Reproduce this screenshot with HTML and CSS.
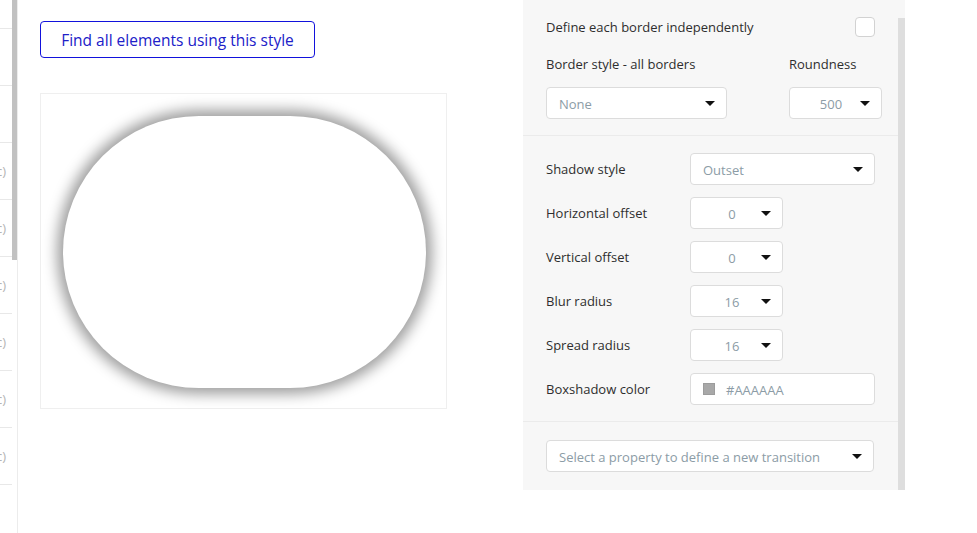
FILE: index.html
```html
<!DOCTYPE html>
<html lang="en">
<head>
<meta charset="utf-8">
<title>Style editor</title>
<link rel="stylesheet" href="styles.css">
</head>
<body>
<div class="app">
  <aside class="sidebar">
    <div class="rows">
      <div class="row first"></div>
      <div class="row"></div>
      <div class="row"></div>
      <div class="row"><span>Style (abc)</span></div>
      <div class="row"><span>Style (abc)</span></div>
      <div class="row"><span>Style (abc)</span></div>
      <div class="row"><span>Style (abc)</span></div>
      <div class="row"><span>Style (abc)</span></div>
      <div class="row"><span>Style (abc)</span></div>
    </div>
    <div class="side-scroll"></div>
  </aside>

  <main class="main">
    <button class="find-btn" type="button">Find all elements using this style</button>
    <div class="canvas">
      <div class="preview"></div>
    </div>
  </main>

  <section class="panel">
    <div class="panel-body">
      <div class="section borders">
        <div class="check-row">
          <span class="label">Define each border independently</span>
          <span class="checkbox"></span>
        </div>
        <div class="border-grid">
          <span class="label">Border style - all borders</span>
          <span class="label">Roundness</span>
          <div class="select"><span class="val">None</span><i class="caret"></i></div>
          <div class="select num"><span class="val">500</span><i class="caret"></i></div>
        </div>
      </div>

      <div class="section shadow">
        <div class="field-grid">
          <span class="label">Shadow style</span>
          <div class="select wide"><span class="val">Outset</span><i class="caret"></i></div>

          <span class="label">Horizontal offset</span>
          <div class="select num"><span class="val">0</span><i class="caret"></i></div>

          <span class="label">Vertical offset</span>
          <div class="select num"><span class="val">0</span><i class="caret"></i></div>

          <span class="label">Blur radius</span>
          <div class="select num"><span class="val">16</span><i class="caret"></i></div>

          <span class="label">Spread radius</span>
          <div class="select num"><span class="val">16</span><i class="caret"></i></div>

          <span class="label">Boxshadow color</span>
          <div class="select wide color"><span class="swatch"></span><span class="val">#AAAAAA</span></div>
        </div>
      </div>

      <div class="section transition">
        <div class="select full"><span class="val">Select a property to define a new transition</span><i class="caret"></i></div>
      </div>
    </div>
    <div class="panel-scroll"></div>
  </section>
</div>
</body>
</html>
```

FILE: styles.css
```css
* { box-sizing: border-box; }

html, body {
  margin: 0;
  padding: 0;
  background: #ffffff;
}

body {
  font-family: "Open Sans", "Noto Sans", "Liberation Sans", sans-serif;
  font-size: 13px;
  color: #333333;
}

.app {
  display: flex;
  align-items: flex-start;
  width: 977px;
  height: 533px;
  overflow: hidden;
}

/* left strip */
.sidebar {
  flex: none;
  display: flex;
  width: 18px;
  height: 533px;
  border-right: 1px solid #ececec;
}

.rows {
  width: 12px;
  overflow: hidden;
}

.row {
  height: 57px;
  border-bottom: 1px solid #e8e8e8;
  display: flex;
  align-items: center;
  justify-content: flex-end;
  padding-right: 6px;
  white-space: nowrap;
  color: #b5b5b5;
  font-size: 13px;
}

.row.first {
  height: 29px;
}

.side-scroll {
  width: 5px;
  height: 260px;
  background: #c1c1c1;
}

/* main area */
.main {
  flex: none;
  width: 505px;
  padding: 21px 0 0 22px;
}

.find-btn {
  display: block;
  width: 275px;
  height: 37px;
  padding: 0;
  border: 1px solid #1212dc;
  border-radius: 4px;
  background: #ffffff;
  color: #2020c8;
  font-family: "Open Sans", "Noto Sans", sans-serif;
  font-size: 15.5px;
  cursor: pointer;
}

.canvas {
  margin-top: 35px;
  width: 407px;
  height: 316px;
  border: 1px solid #efefef;
  padding: 22px;
}

.preview {
  width: 363px;
  height: 272px;
  background: #ffffff;
  border-radius: 500px;
  box-shadow: 0 0 14px 6px #9e9e9e;
}

/* right panel */
.panel {
  flex: none;
  display: flex;
  width: 382px;
  height: 490px;
  background: #f7f7f7;
}

.panel-body {
  flex: none;
  width: 375px;
  min-width: 0;
}

.panel-scroll {
  flex: none;
  width: 7px;
  margin-top: 18px;
  background: #dedede;
}

.section {
  border-bottom: 1px solid #ebebeb;
}

.section.borders {
  padding: 17px 23px 16px;
}

.section.shadow {
  padding: 17px 23px 16px;
}

.section.transition {
  padding: 18px 23px 17px;
  border-bottom: none;
}

.label {
  line-height: 18px;
  color: #2e2e2e;
  white-space: nowrap;
}

.check-row {
  display: flex;
  align-items: center;
  justify-content: space-between;
  height: 20px;
}

.checkbox {
  width: 20px;
  height: 20px;
  border: 1px solid #d2d2d2;
  border-radius: 4px;
  background: #ffffff;
}

.border-grid {
  display: grid;
  grid-template-columns: 181px 93px;
  column-gap: 62px;
  row-gap: 14px;
  margin-top: 18px;
}

.field-grid {
  display: grid;
  grid-template-columns: 144px auto;
  row-gap: 12px;
  align-items: center;
  justify-items: start;
}

.select {
  display: flex;
  align-items: center;
  height: 32px;
  padding: 0 11px 0 12px;
  border: 1px solid #dcdcdc;
  border-radius: 4px;
  background: #ffffff;
  color: #8c9ca6;
  white-space: nowrap;
}

.select .val {
  flex: 1;
  padding-top: 1px;
}

.select.num {
  width: 93px;
}

.select.num .val {
  text-align: center;
}

.select.wide {
  width: 185px;
}

.select.full {
  width: 328px;
}

.caret {
  flex: none;
  width: 0;
  height: 0;
  border-left: 5px solid transparent;
  border-right: 5px solid transparent;
  border-top: 5px solid #111111;
}

.swatch {
  flex: none;
  width: 12px;
  height: 12px;
  margin-right: 11px;
  background: #a8a8a8;
  border: 1px solid #9c9c9c;
}
```
